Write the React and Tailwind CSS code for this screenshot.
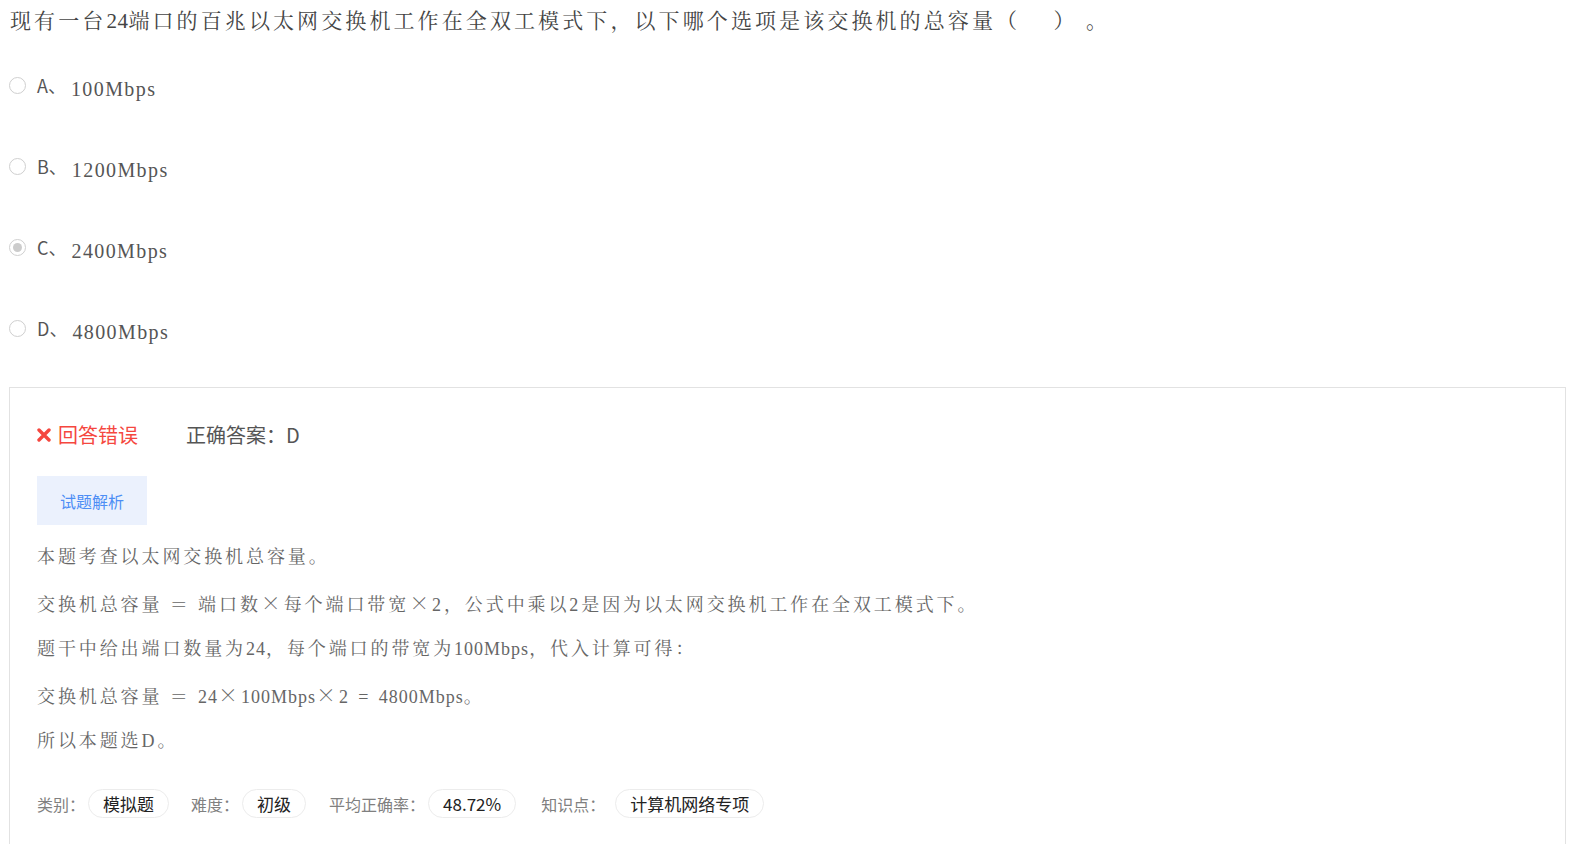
import React from "react";

const serif = { fontFamily: '"Liberation Serif", "Noto Serif CJK SC", "Noto Sans CJK SC", serif' };
const cjkSerif = { fontFamily: '"Noto Serif CJK SC", "Noto Sans CJK SC", serif' };

function X() {
  return <span style={cjkSerif} className="text-[20px]">×</span>;
}

function Radio({ checked }) {
  return (
    <span className="w-[17px] h-[17px] rounded-full border border-[#cfcfcf] bg-white flex items-center justify-center shrink-0">
      {checked && <span className="w-[9px] h-[9px] rounded-full bg-[#cccccc]" />}
    </span>
  );
}

function Option({ letter, text, checked }) {
  return (
    <div className="flex items-center h-[81px]">
      <Radio checked={checked} />
      <span className="ml-[11px] text-[18px] text-[#555] font-['Noto_Sans_CJK_SC',sans-serif] leading-none -mt-[2px]">{letter}、</span>
      <span className="ml-[5px] text-[20px] text-[#555] tracking-[1.4px] leading-none mt-[6px]" style={serif}>{text}</span>
    </div>
  );
}

function Tag({ label, value, wide }) {
  return (
    <div className="flex items-center">
      <span className="text-[16px] text-[#808080]">{label}：</span>
      <span className={(wide ? "ml-[10px] " : "ml-[3px] ") + "h-[29px] px-[14px] rounded-full border border-[#ececec] flex items-center text-[17px] text-[#222]"}>{value}</span>
    </div>
  );
}

export default function App() {
  return (
    <div className="bg-white min-h-[844px] font-['Noto_Sans_CJK_SC',sans-serif]">
      <div className="pl-[10px] pt-[6px]">
        <div className="text-[21px] text-[#444] tracking-[3.1px] leading-[30px] whitespace-nowrap" style={serif}>
          现有一台<span className="tracking-[0.5px]">24</span>端口的百兆以太网交换机工作在全双工模式下，以下哪个选项是该交换机的总容量（&nbsp;&nbsp;&nbsp;&nbsp;）&nbsp;。
        </div>
      </div>
      <div className="pl-[9px] pt-[9px]">
        <Option letter="A" text="100Mbps" />
        <Option letter="B" text="1200Mbps" />
        <Option letter="C" text="2400Mbps" checked />
        <Option letter="D" text="4800Mbps" />
      </div>
      <div className="ml-[9px] mr-[3px] mt-[18px] border-t border-l border-r border-[#e2e2e2] pl-[27px] pt-[32px] pb-[40px]">
        <div className="flex items-center h-[30px]">
          <svg width="14" height="14" viewBox="0 0 14 14" className="mr-[7px]">
            <path d="M2 2 L12 12 M12 2 L2 12" stroke="#f5473f" strokeWidth="3.4" strokeLinecap="round" />
          </svg>
          <span className="text-[20px] text-[#f5473f]">回答错误</span>
          <span className="ml-[48px] text-[20px] text-[#555]">正确答案：D</span>
        </div>
        <div className="mt-[26px] w-[110px] h-[49px] bg-[#ebf1fd] flex items-center justify-center text-[16px] text-[#4d8ef5]">试题解析</div>
        <div className="mt-[9px] text-[18px] text-[#666] tracking-[2.9px] whitespace-nowrap" style={serif}>
          <p className="h-[46px] leading-[46px]">本题考查以太网交换机总容量。</p>
          <p className="h-[46px] leading-[46px]">交换机总容量 ＝ 端口数<X />每个端口带宽<X />2，公式中乘以2是因为以太网交换机工作在全双工模式下。</p>
          <p className="h-[46px] leading-[46px]">题干中给出端口数量为<span className="tracking-[1px]">24</span>，每个端口的带宽为<span className="tracking-[1px]">100Mbps</span>，代入计算可得：</p>
          <p className="h-[46px] leading-[46px]">交换机总容量 ＝ <span className="tracking-[1px]">24</span><X /><span className="tracking-[1px]">100Mbps</span><X />2 = <span className="tracking-[1px]">4800Mbps</span>。</p>
          <p className="h-[46px] leading-[46px]">所以本题选D。</p>
        </div>
        <div className="mt-[25px] flex items-center gap-[22px]">
          <Tag label="类别" value="模拟题" />
          <Tag label="难度" value="初级" />
          <div className="ml-[1px]"><Tag label="平均正确率" value="48.72%" /></div>
          <div className="ml-[3px]"><Tag label="知识点" value="计算机网络专项" wide /></div>
        </div>
      </div>
    </div>
  );
}
